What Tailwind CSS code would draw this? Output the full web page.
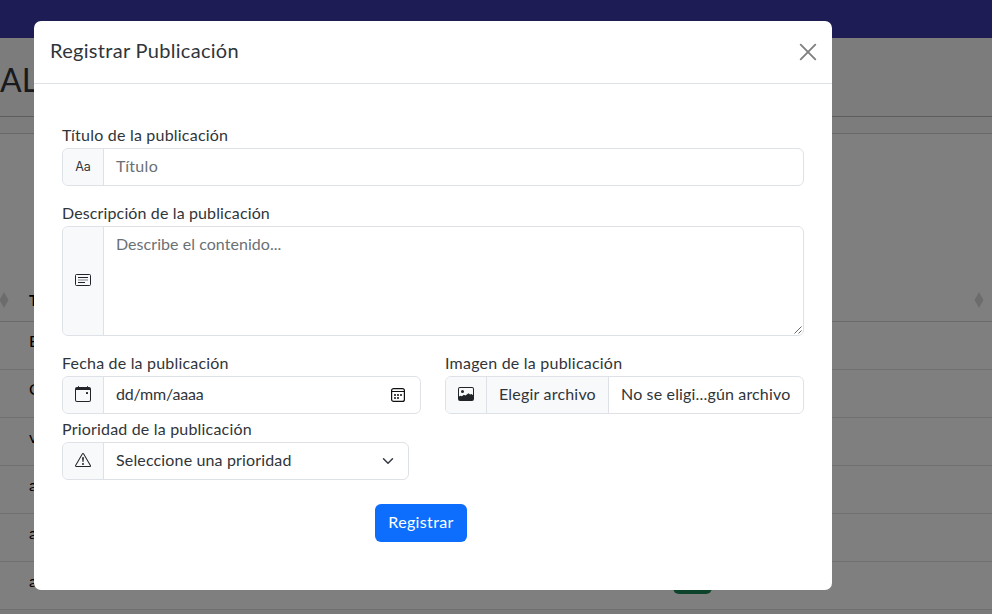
<!DOCTYPE html>
<html lang="es">
<head>
<meta charset="utf-8">
<title>Registrar Publicación</title>
<script src="https://cdn.jsdelivr.net/npm/@tailwindcss/browser@4"></script>
</head>
<body class="relative h-[614px] w-[992px] overflow-hidden bg-white font-[Lato,'Noto_Sans',sans-serif] text-base text-[#30353a]">
<!-- Page under the dialog -->
<div class="flex h-[614px] flex-col overflow-hidden">
  <div class="h-[38px] shrink-0 bg-[#3c38a8]"></div>
  <div class="flex h-[79px] shrink-0 items-center border-b border-[#bcbcbc] bg-[#f8f8f8] pt-[5px]"><span class="text-[32px]">AL</span></div>
  <div class="h-[17px] shrink-0 border-b border-[#d0d0d0] bg-[#f8f8f8]"></div>
  <div class="flex h-[188px] shrink-0 items-end justify-between border-b border-[#d6d6d6] pb-[13px] text-black">
    <div class="flex items-center">
      <svg class="-ml-px h-4 w-[10px]" viewBox="0 0 10 16" fill="#d8d8d8"><path d="M5 0 9.500 8 5 16 .5 8z"/></svg>
      <span class="ml-[20px] leading-4 font-bold">T</span>
    </div>
    <svg class="mr-[8px] h-4 w-[10px]" viewBox="0 0 10 16" fill="#d8d8d8"><path d="M5 0 9.500 8 5 16 .5 8z"/></svg>
  </div>
  <div class="h-12 shrink-0 border-b border-[#dedede] pt-[7px] pl-[29px] text-black">E</div>
  <div class="h-12 shrink-0 border-b border-[#dedede] pt-[7px] pl-[29px] text-black">C</div>
  <div class="h-12 shrink-0 border-b border-[#dedede] pt-[7px] pl-[29px] text-black">v</div>
  <div class="h-12 shrink-0 border-b border-[#dedede] pt-[7px] pl-[29px] text-black">a</div>
  <div class="h-12 shrink-0 border-b border-[#dedede] pt-[7px] pl-[29px] text-black">a</div>
  <div class="flex h-12 shrink-0 border-b border-[#dedede] pt-[7px] pl-[29px] text-black"><span class="w-[644px]">a</span><span class="h-[25px] w-[39px] rounded-md bg-[#198754]"></span></div>
  <div class="h-1 shrink-0 bg-[#f4f4f4]"></div>
</div>
<div class="absolute inset-0 bg-black/50"></div>

<!-- Dialog -->
<div class="absolute top-[21px] left-[34px] flex h-[569px] w-[798px] flex-col rounded-[7px] bg-white">
  <div class="flex h-[63px] shrink-0 items-center justify-between border-b border-[#dee2e6] px-4">
    <h5 class="pb-[4px] text-[20px] leading-[30px] tracking-[.3px]">Registrar Publicación</h5>
    <svg class="h-4 w-4" viewBox="0 0 16 16" fill="none" stroke="#808080" stroke-width="1.9" stroke-linecap="round" overflow="visible"><path d="M.7.7 15.3 15.3M15.3.7.7 15.3"/></svg>
  </div>
  <form class="flex flex-col px-7 pt-10">
    <label class="h-6 leading-[22px] tracking-[.21px]">Título de la publicación</label>
    <div class="flex h-[38px] rounded-md border border-[#dee2e6]">
      <div class="flex w-[41px] items-center justify-center rounded-l-md border-r border-[#dee2e6] bg-[#f8f9fa] font-[Inter,sans-serif] text-[12.5px]">Aa</div>
      <div class="px-3 pt-[5px] tracking-[.3px] text-[#6b7075]">Título</div>
    </div>
    <label class="mt-4 h-6 leading-[22px] tracking-[.13px]">Descripción de la publicación</label>
    <div class="flex h-[110px] rounded-md border border-[#dee2e6]">
      <div class="flex w-[41px] items-center justify-center rounded-l-md border-r border-[#dee2e6] bg-[#f8f9fa] pb-[2px]">
        <svg class="h-4 w-4" viewBox="0 0 16 16" fill="none" stroke="#212529"><rect x=".5" y="2.5" width="15" height="11" rx="1"/><path d="M3 5.5h10M3 10.5h7"/><path d="M3 8h10" stroke-opacity=".55"/></svg>
      </div>
      <div class="grow px-3 pt-[5px] tracking-[.05px] text-[#6b7075]">Describe el contenido...</div>
      <svg class="mr-px mb-px h-[8px] w-[8px] self-end" viewBox="0 0 8 8" fill="none" stroke="#555" stroke-width=".9"><path d="M.5 7.5l7-7M4.5 7.5l3-3"/></svg>
    </div>
    <div class="mt-4 flex gap-6">
      <div class="w-[359px]">
        <label class="block h-6 leading-[22px] tracking-[.19px]">Fecha de la publicación</label>
        <div class="flex h-[38px] rounded-md border border-[#dee2e6]">
          <div class="flex w-[41px] items-center justify-center rounded-l-md border-r border-[#dee2e6] bg-[#f8f9fa] pb-[2px]">
            <svg class="h-4 w-4" viewBox="0 0 16 16" fill="#212529"><path d="M11 6.5a.5.5 0 0 1 .5-.5h1a.5.5 0 0 1 .5.5v1a.5.5 0 0 1-.5.5h-1a.5.5 0 0 1-.5-.5z"/><path d="M3.500 0a.5.5 0 0 1 .5.5V1h8V.5a.5.5 0 0 1 1 0V1h1a2 2 0 0 1 2 2v11a2 2 0 0 1-2 2H2a2 2 0 0 1-2-2V3a2 2 0 0 1 2-2h1V.5a.5.5 0 0 1 .5-.5M1 4v10a1 1 0 0 0 1 1h12a1 1 0 0 0 1-1V4z"/></svg>
          </div>
          <div class="flex grow items-center justify-between pr-[15px] pl-3"><span class="pb-[2px] tracking-[-.2px]">dd/mm/aaaa</span>
            <svg class="h-[14px] w-[14px]" viewBox="0 0 14 14" fill="none" stroke="#111"><rect x=".6" y=".6" width="12.800" height="12.800" rx="2" stroke-width="1.200"/><path d="M1 3.500h12"/><path d="M6 7h2M9 7h2M3 7h2M3 10h2M6 10h2" stroke-width="1.700"/></svg>
          </div>
        </div>
      </div>
      <div class="w-[359px]">
        <label class="block h-6 leading-[22px] tracking-[.22px]">Imagen de la publicación</label>
        <div class="flex h-[38px] overflow-hidden rounded-md border border-[#dee2e6]">
          <div class="flex w-[41px] items-center justify-center border-r border-[#dee2e6] bg-[#f8f9fa] pb-[2px]">
            <svg class="h-4 w-4" viewBox="0 0 16 16" fill="#212529"><path fill-rule="evenodd" d="M2 1h12a2 2 0 0 1 2 2v10a2 2 0 0 1-2 2H2a2 2 0 0 1-2-2V3a2 2 0 0 1 2-2M1 10.500l1.200-.7 1.800.400 1.800-1.500 1.700.800L10.500 7.200l1.700 1.300 1.500-.5L15 9.200V3a1 1 0 0 0-1-1H2a1 1 0 0 0-1 1zM4.500 4a1.500 1.500 0 1 0 0 3 1.500 1.500 0 0 0 0-3"/></svg>
          </div>
          <div class="flex w-[122px] items-center border-r border-[#dee2e6] bg-[#f8f9fa] pb-[2px] pl-3 tracking-[.2px]">Elegir archivo</div>
          <div class="flex items-center pb-[2px] pl-3 tracking-[.16px] whitespace-nowrap">No se eligi...gún archivo</div>
        </div>
      </div>
    </div>
    <label class="mt-1 block h-6 leading-[22px] tracking-[.19px]">Prioridad de la publicación</label>
    <div class="flex h-[38px] w-[347px] rounded-md border border-[#dee2e6]">
      <div class="flex w-[41px] items-center justify-center rounded-l-md border-r border-[#dee2e6] bg-[#f8f9fa] pb-[2px]">
        <svg class="h-4 w-4" viewBox="0 0 16 16" fill="#212529"><path d="M7.938 2.016A.13.13 0 0 1 8.002 2a.13.13 0 0 1 .063.016.15.15 0 0 1 .054.057l6.857 11.667c.036.060.035.124.002.183a.2.2 0 0 1-.054.060.1.1 0 0 1-.066.017H1.146a.1.1 0 0 1-.066-.017.2.2 0 0 1-.054-.060.18.18 0 0 1 .002-.183L7.884 2.073a.15.15 0 0 1 .054-.057m1.044-.450a1.130 1.130 0 0 0-1.960 0L.165 13.233c-.457.778.091 1.767.980 1.767h13.713c.889 0 1.438-.990.980-1.767z"/><path d="M7.002 12a1 1 0 1 1 2 0 1 1 0 0 1-2 0M7.100 5.995a.905.905 0 1 1 1.800 0l-.350 3.507a.552.552 0 0 1-1.100 0z"/></svg>
      </div>
      <div class="flex grow items-center justify-between pr-[14px] pl-3"><span class="pb-[2px] tracking-[.15px]">Seleccione una prioridad</span>
        <svg class="h-3 w-3" viewBox="0 0 16 16" fill="none" stroke="#343a40" stroke-width="2" stroke-linecap="round" stroke-linejoin="round"><path d="m2 5 6 6 6-6"/></svg>
      </div>
    </div>
    <button type="button" class="mt-6 ml-[313px] h-[38px] w-[92px] rounded-md bg-[#0d6efd] pb-[2px] tracking-[.35px] text-white">Registrar</button>
  </form>
</div>
</body>
</html>
